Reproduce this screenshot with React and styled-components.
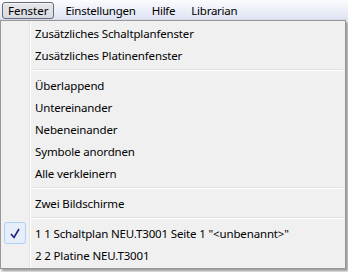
import React from 'react';
import styled, { createGlobalStyle } from 'styled-components';

const Global = createGlobalStyle`
  html, body {
    margin: 0;
    padding: 0;
    background: #f0f0f0;
  }
  body {
    width: 348px;
    height: 272px;
    overflow: hidden;
    font-family: "Noto Sans", "Open Sans", sans-serif;
    font-size: 11.5px;
    letter-spacing: -0.15px;
    color: #000;
  }
`;

const Frame = styled.div`
  width: 348px;
  height: 272px;
  display: flex;
  flex-direction: column;
  background: #f0f0f0;
`;

const MenuBar = styled.div`
  height: 19px;
  display: flex;
  align-items: center;
  padding: 0 2px;
  background: linear-gradient(#fbfcfe, #e7ebf6 70%, #dfe5f3);
  border-bottom: 1px solid #d5dbea;
`;

const BarItem = styled.div`
  height: 17px;
  display: flex;
  align-items: center;
  padding: 0 ${({ $active }) => ($active ? '5px' : '7px')};
  margin-right: ${({ $active }) => ($active ? '3px' : '0')};
  box-sizing: border-box;
  border: ${({ $active }) => ($active ? '1px solid #656b79' : '1px solid transparent')};
  border-radius: 3px;
  background: ${({ $active }) => ($active ? 'linear-gradient(#e6e7ea, #d9dbe0)' : 'transparent')};
  box-shadow: ${({ $active }) => ($active ? 'inset 0 1px 0 #f4f4f6' : 'none')};
  margin-top: 1px;
  letter-spacing: ${({ $active }) => ($active ? '0' : '-0.25px')};
`;

const Dropdown = styled.div`
  position: relative;
  width: 346px;
  height: 249px;
  box-sizing: border-box;
  border: 1px solid #979797;
  background: #f0f0f0;
  padding: 1px 2px;
  display: flex;
  flex-direction: column;
  box-shadow: 2px 2px 2px rgba(0, 0, 0, 0.35);

  &::before {
    content: '';
    position: absolute;
    top: 0;
    bottom: 0;
    left: 28px;
    width: 1px;
    background: #e2e3e3;
    border-right: 1px solid #ffffff;
  }
`;

const Item = styled.div`
  height: 22px;
  display: flex;
  align-items: center;
  flex-shrink: 0;
`;

const Gutter = styled.div`
  width: 31px;
  height: 22px;
  display: flex;
  align-items: center;
  padding-left: 1px;
`;

const Label = styled.span`
  white-space: pre;
`;

const Separator = styled.div`
  height: 8px;
  flex-shrink: 0;
  display: flex;
  flex-direction: column;
  justify-content: center;
  padding-left: 30px;

  &::after {
    content: '';
    display: block;
    height: 1px;
    background: #e0e0e0;
    border-bottom: 1px solid #ffffff;
  }
`;

const CheckBox = styled.div`
  width: 22px;
  height: 22px;
  box-sizing: border-box;
  border: 1px solid #aecff7;
  border-radius: 3px;
  background: #e6eefa;
  display: flex;
  align-items: center;
  justify-content: center;
  position: relative;
  z-index: 1;
`;

const Check = () => (
  <svg width="10" height="11" viewBox="0 0 10 11">
    <path d="M1 6 L4 9.5 L9 1" fill="none" stroke="#1b1f7c" strokeWidth="1.6" />
  </svg>
);

const MenuItem = ({ label, checked }) => (
  <Item>
    <Gutter>{checked && <CheckBox><Check /></CheckBox>}</Gutter>
    <Label>{label}</Label>
  </Item>
);

export default function App() {
  return (
    <Frame>
      <Global />
      <MenuBar>
        <BarItem $active>Fenster</BarItem>
        <BarItem>Einstellungen</BarItem>
        <BarItem>Hilfe</BarItem>
        <BarItem>Librarian</BarItem>
      </MenuBar>
      <Dropdown>
        <MenuItem label="Zusätzliches Schaltplanfenster" />
        <MenuItem label="Zusätzliches Platinenfenster" />
        <Separator />
        <MenuItem label="Überlappend" />
        <MenuItem label="Untereinander" />
        <MenuItem label="Nebeneinander" />
        <MenuItem label="Symbole anordnen" />
        <MenuItem label="Alle verkleinern" />
        <Separator />
        <MenuItem label="Zwei Bildschirme" />
        <Separator />
        <MenuItem checked label={'1 1 Schaltplan NEU.T3001 Seite 1 "<unbenannt>"'} />
        <MenuItem label="2 2 Platine NEU.T3001" />
      </Dropdown>
    </Frame>
  );
}
